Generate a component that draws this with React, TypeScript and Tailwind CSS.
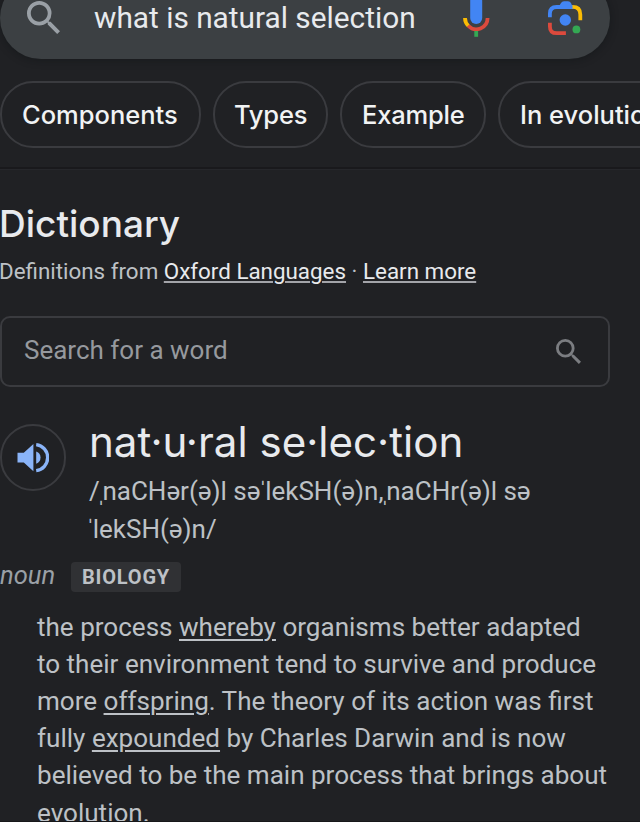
import type { ReactNode } from "react";

function SearchGlyph({ className }: { className: string }) {
  return (
    <svg viewBox="3 3 17.5 17.5" className={className} fill="currentColor">
      <path d="M15.5 14h-.79l-.28-.27A6.471 6.471 0 0 0 16 9.5 6.5 6.5 0 1 0 9.5 16c1.61 0 3.09-.59 4.23-1.57l.27.28v.79l5 4.99L20.49 19l-4.99-5zm-6 0C7.01 14 5 11.99 5 9.5S7.01 5 9.5 5 14 7.01 14 9.5 11.99 14 9.5 14z" />
    </svg>
  );
}

function MicGlyph() {
  return (
    <svg viewBox="0 0 28 42" className="mb-[4px] h-[42px] w-7 shrink-0" fill="none">
      <rect x="8.2" y="0" width="12" height="29" rx="6" fill="#4285f4" />
      <path d="M3 23A11.3 11.3 0 0 0 6.4 31" stroke="#fbbc04" strokeWidth="3.8" />
      <path d="M6.2 30.8A11.3 11.3 0 0 0 25.6 23" stroke="#dc4a3d" strokeWidth="3.8" />
      <path d="M14.2 36v5.8" stroke="#34a853" strokeWidth="3.8" />
    </svg>
  );
}

function LensGlyph() {
  return (
    <svg viewBox="0 0 36 36" className="h-9 w-9 shrink-0" fill="none">
      <path d="M2.9 17.2V13.6Q2.9 7 9.5 7H26" stroke="#4285f4" strokeWidth="3.8" />
      <path d="M11 8l3-5q1-1.8 3-1.8h4q2 0 3 1.8l2 5z" fill="#4285f4" />
      <path d="M25.5 6.9q7.8 0 7.8 7.5v5.8" stroke="#fbbc04" strokeWidth="3.8" />
      <path d="M2.9 22.8v3.6q0 6.8 6.8 6.8h9.2" stroke="#dc4a3d" strokeWidth="3.8" />
      <circle cx="18.3" cy="20" r="5.7" fill="#4285f4" />
      <circle cx="29.4" cy="29.4" r="3.9" fill="#34a853" />
    </svg>
  );
}

function SpeakerGlyph() {
  return (
    <svg viewBox="0 0 32 32" className="mr-px h-8 w-8" fill="none">
      <path d="M.5 10.8h6.3L16.4 1.9v27.4L6.8 20.4H.5z" fill="#8ab4f8" />
      <path d="M19.2 9.4a6.6 6.6 0 0 1 0 12.4z" fill="#8ab4f8" />
      <path d="M19.2 2.6a13.1 13.1 0 0 1 0 26" stroke="#8ab4f8" strokeWidth="3.4" />
    </svg>
  );
}

function Chip({ children, width }: { children: ReactNode; width: string }) {
  return (
    <button
      className={`${width} flex h-[67px] shrink-0 items-center whitespace-nowrap rounded-[33px] border-2 border-[#3a3b3f] pl-5 pt-px font-['Inter',sans-serif] font-medium text-[#f1f3f4]`}
    >
      {children}
    </button>
  );
}

function Link({ children }: { children: ReactNode }) {
  return <a className="underline decoration-2 underline-offset-[3px]">{children}</a>;
}

export default function App() {
  return (
    <div className="h-[822px] w-[640px] overflow-hidden border-b border-[#17181a] bg-[#202124] font-['Roboto',sans-serif] text-[#bdc1c6]">
      <header className="h-[170px] overflow-hidden border-b border-[#26272b]">
        <div className="-mt-[23px] flex h-[82px] w-[610px] items-center rounded-full bg-[#3c4043] pl-[27px] shadow-[0_1px_8px_rgba(10,16,18,0.4)]">
          <SearchGlyph className="mb-[2px] h-[33px] w-[33px] shrink-0 text-[#9aa0a6]" />
          <span className="ml-[34px] w-[368px] whitespace-nowrap text-[29.8px] leading-10 text-[#e8eaed]">
            what is natural selection
          </span>
          <MicGlyph />
          <span className="ml-[57px]">
            <LensGlyph />
          </span>
        </div>
        <nav className="mt-[22px] flex h-[88px] gap-3 border-b-2 border-[#19191c] text-[25.5px]">
          <Chip width="w-[201px]">Components</Chip>
          <Chip width="w-[115px]">
            <span className="-ml-px tracking-[-0.2px]">Types</span>
          </Chip>
          <Chip width="w-[146px]">
            <span className="tracking-[-0.2px]">Example</span>
          </Chip>
          <Chip width="w-[212px]">In evolution</Chip>
        </nav>
      </header>

      <main>
        <h1 className="-ml-px mt-[30px] font-['Inter',sans-serif] text-[37px] font-medium leading-[48px] text-[#e8eaed]">
          Dictionary
        </h1>
        <p className="-ml-px mt-[8px] whitespace-nowrap text-[22.38px] leading-[30px]">
          Definitions from{" "}
          <a className="text-[#e8eaed] underline decoration-[#a3a4a9] decoration-2 underline-offset-[2px]">Oxford Languages</a> ·{" "}
          <a className="text-[#e8eaed] underline decoration-[#a3a4a9] decoration-2 underline-offset-[2px]">Learn more</a>
        </p>

        <div className="mt-[30px] flex h-[71px] w-[610px] items-center justify-between rounded-[10px] border-2 border-[#3a3b3f] pl-[22px] pr-[27px]">
          <span className="pb-[3px] text-[26px] leading-8 text-[#96999e]">Search for a word</span>
          <SearchGlyph className="h-[25px] w-[25px] text-[#7b7d81]" />
        </div>

        <section className="mt-[34px] flex h-[133px]">
          <button className="mt-[3px] flex h-[67px] w-[66px] shrink-0 items-center justify-center rounded-full border-2 border-[#3a3b3f]">
            <SpeakerGlyph />
          </button>
          <div className="ml-[23px] whitespace-nowrap">
            <h2 className="-mt-px font-['Inter',sans-serif] text-[42.1px] font-[430] leading-[44px] text-[#e8eaed]">
              nat·u·ral se·lec·tion
            </h2>
            <p className="mt-[8px] text-[26px] leading-[38.3px]">
              /<i className="-ml-[3px] -mr-[3px] not-italic">ˌ</i>naCHər(ə)l sə
              <i className="-ml-[2px] -mr-[2px] not-italic">ˈ</i>lekSH(ə)n,
              <i className="-ml-[3px] -mr-[3px] not-italic">ˌ</i>naCHr(ə)l sə
              <br />
              <i className="-ml-[3px] -mr-[2px] not-italic">ˈ</i>lekSH(ə)n/
            </p>
          </div>
        </section>

        <div className="mt-[8px] flex h-[30px] items-center">
          <em className="w-[71px] pb-[5px] text-[25.5px] leading-[30px] text-[#9aa0a6]">noun</em>
          <span className="flex h-[30px] w-[110px] items-center rounded-[4px] bg-[#303134] pl-[11px] text-[20px] font-bold leading-[30px] tracking-[0.8px]">
            BIOLOGY
          </span>
        </div>

        <p className="ml-[37px] mt-[16.5px] whitespace-nowrap text-[26.05px] leading-[37.2px]">
          the process <Link>whereby</Link> organisms better adapted
          <br />
          to their environment tend to survive and produce
          <br />
          more <Link>offspring</Link>. The theory of its action was first
          <br />
          fully <Link>expounded</Link> by Charles Darwin and is now
          <br />
          believed to be the main process that brings about
          <br />
          evolution.
        </p>
      </main>
    </div>
  );
}
